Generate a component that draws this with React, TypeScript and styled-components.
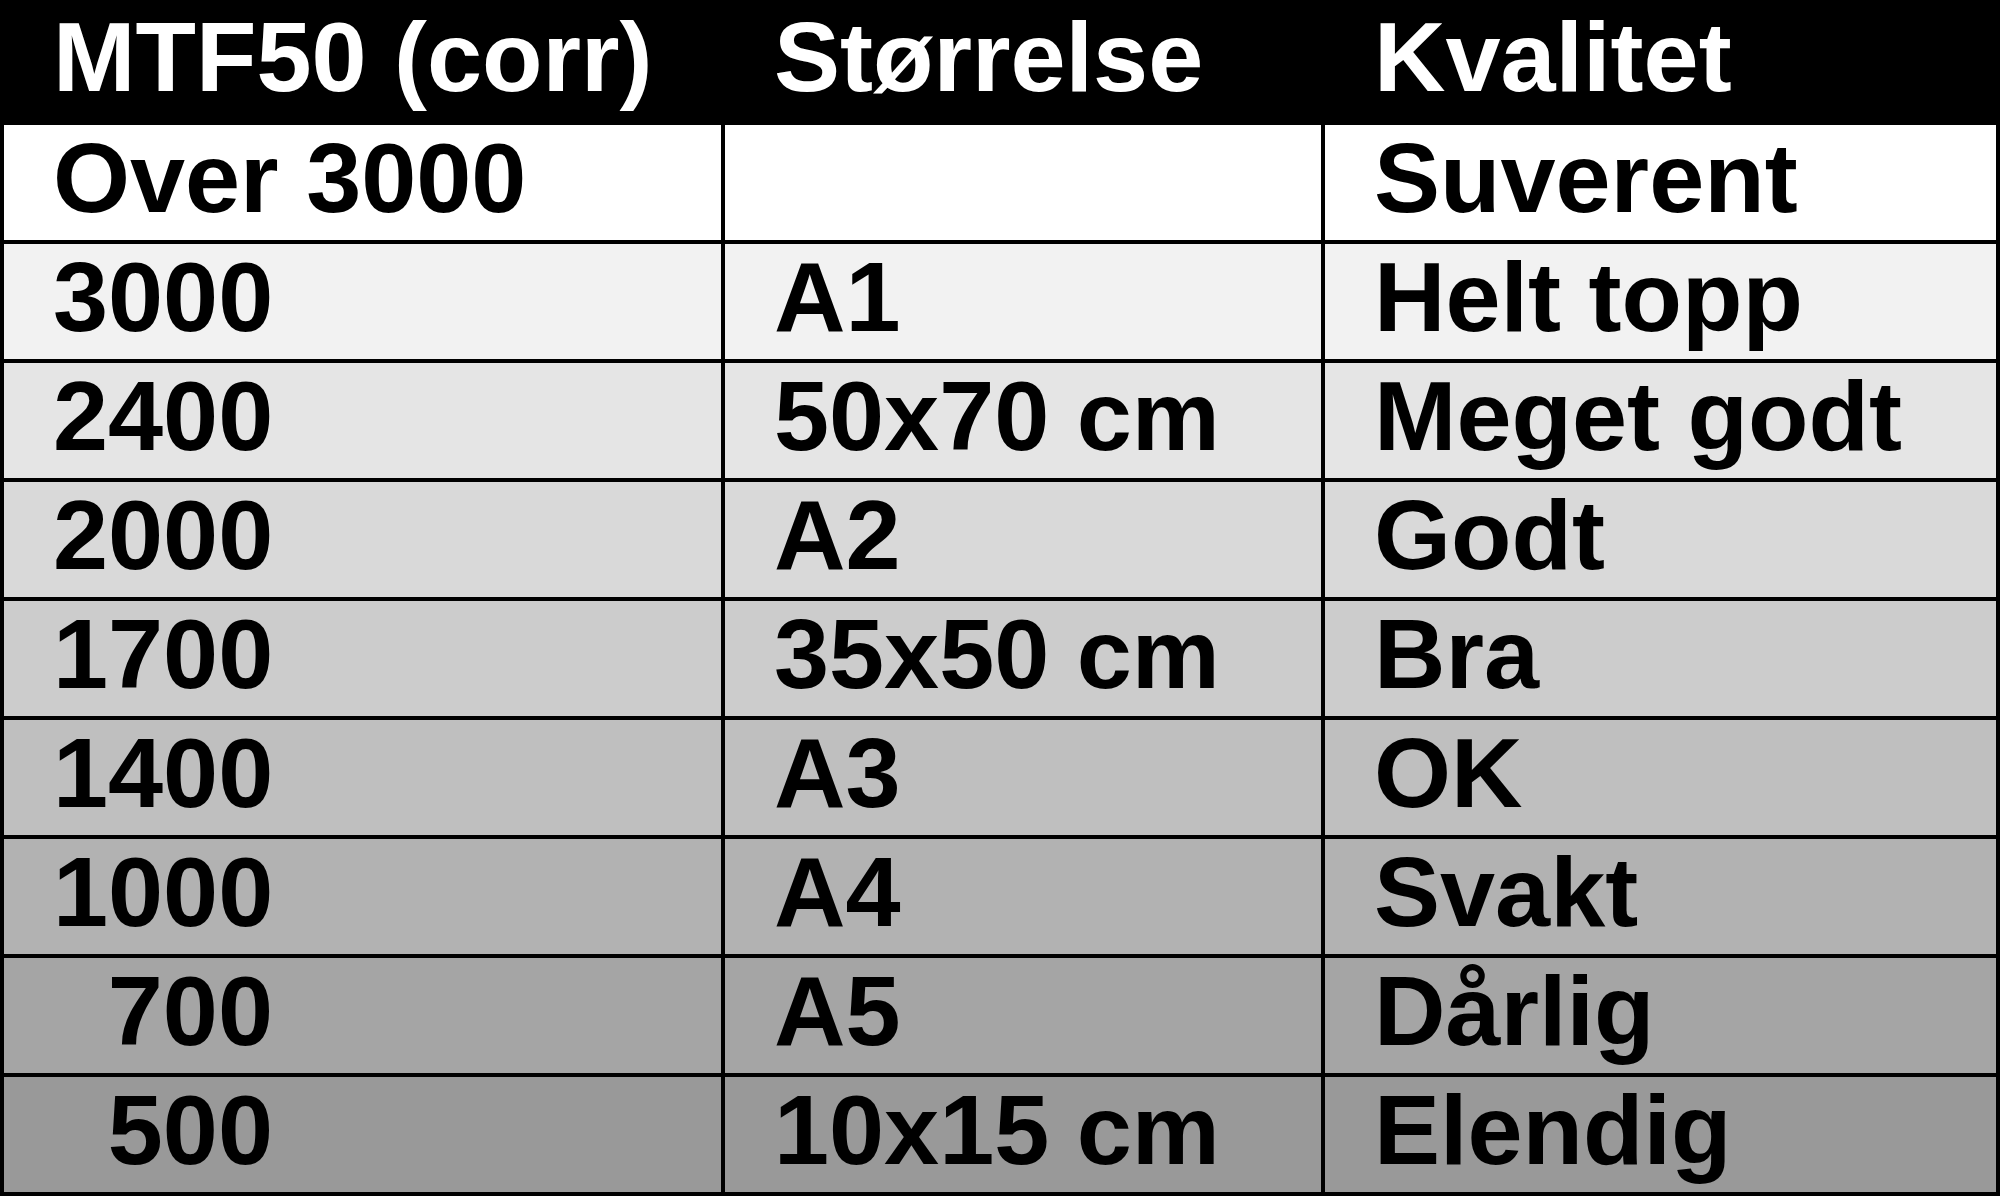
import React from "react";
import styled, { createGlobalStyle } from "styled-components";

const GlobalStyle = createGlobalStyle`
  html, body {
    margin: 0;
    padding: 0;
    background: #000;
    overflow: hidden;
  }
  body {
    font-family: "Liberation Sans", Arial, sans-serif;
  }
`;

const Table = styled.div`
  width: 2000px;
  height: 1196px;
  box-sizing: border-box;
  background: #000;
  padding: 0 4px 4px 4px;
  display: flex;
  flex-direction: column;
`;

const HeaderRow = styled.div`
  display: grid;
  grid-template-columns: 717px 596px 671px;
  column-gap: 4px;
  height: 121px;
  background: #000;
`;

const HeaderCell = styled.div`
  display: flex;
  align-items: center;
  padding: 0 0 8px 49px;
  color: #fff;
  font-size: 99px;
  font-weight: bold;
  line-height: 1;
  white-space: nowrap;
`;

const Row = styled.div`
  display: grid;
  grid-template-columns: 717px 596px 671px;
  column-gap: 4px;
  height: 115px;
  margin-top: 4px;
`;

const Cell = styled.div<{ $shade: string }>`
  display: flex;
  align-items: center;
  padding: 0 0 10px 49px;
  background: ${(p) => p.$shade};
  color: #000;
  font-size: 99px;
  font-weight: bold;
  line-height: 1;
  white-space: nowrap;
`;

// numbers line up on the right, like a figure column
const Num = styled.span`
  display: inline-block;
  min-width: 220px;
  text-align: right;
`;

const rows = [
  { mtf: "Over 3000", size: "", quality: "Suverent", shade: "#ffffff" },
  { mtf: "3000", size: "A1", quality: "Helt topp", shade: "#f2f2f2" },
  { mtf: "2400", size: "50x70 cm", quality: "Meget godt", shade: "#e5e5e5" },
  { mtf: "2000", size: "A2", quality: "Godt", shade: "#d9d9d9" },
  { mtf: "1700", size: "35x50 cm", quality: "Bra", shade: "#cccccc" },
  { mtf: "1400", size: "A3", quality: "OK", shade: "#bfbfbf" },
  { mtf: "1000", size: "A4", quality: "Svakt", shade: "#b2b2b2" },
  { mtf: "700", size: "A5", quality: "Dårlig", shade: "#a5a5a5" },
  { mtf: "500", size: "10x15 cm", quality: "Elendig", shade: "#999999" },
] as const;

export default function App() {
  return (
    <>
      <GlobalStyle />
      <Table>
        <HeaderRow>
          <HeaderCell>MTF50 (corr)</HeaderCell>
          <HeaderCell>Størrelse</HeaderCell>
          <HeaderCell>Kvalitet</HeaderCell>
        </HeaderRow>
        {rows.map((r) => (
          <Row key={r.mtf}>
            <Cell $shade={r.shade}>
              <Num>{r.mtf}</Num>
            </Cell>
            <Cell $shade={r.shade}>{r.size}</Cell>
            <Cell $shade={r.shade}>{r.quality}</Cell>
          </Row>
        ))}
      </Table>
    </>
  );
}
